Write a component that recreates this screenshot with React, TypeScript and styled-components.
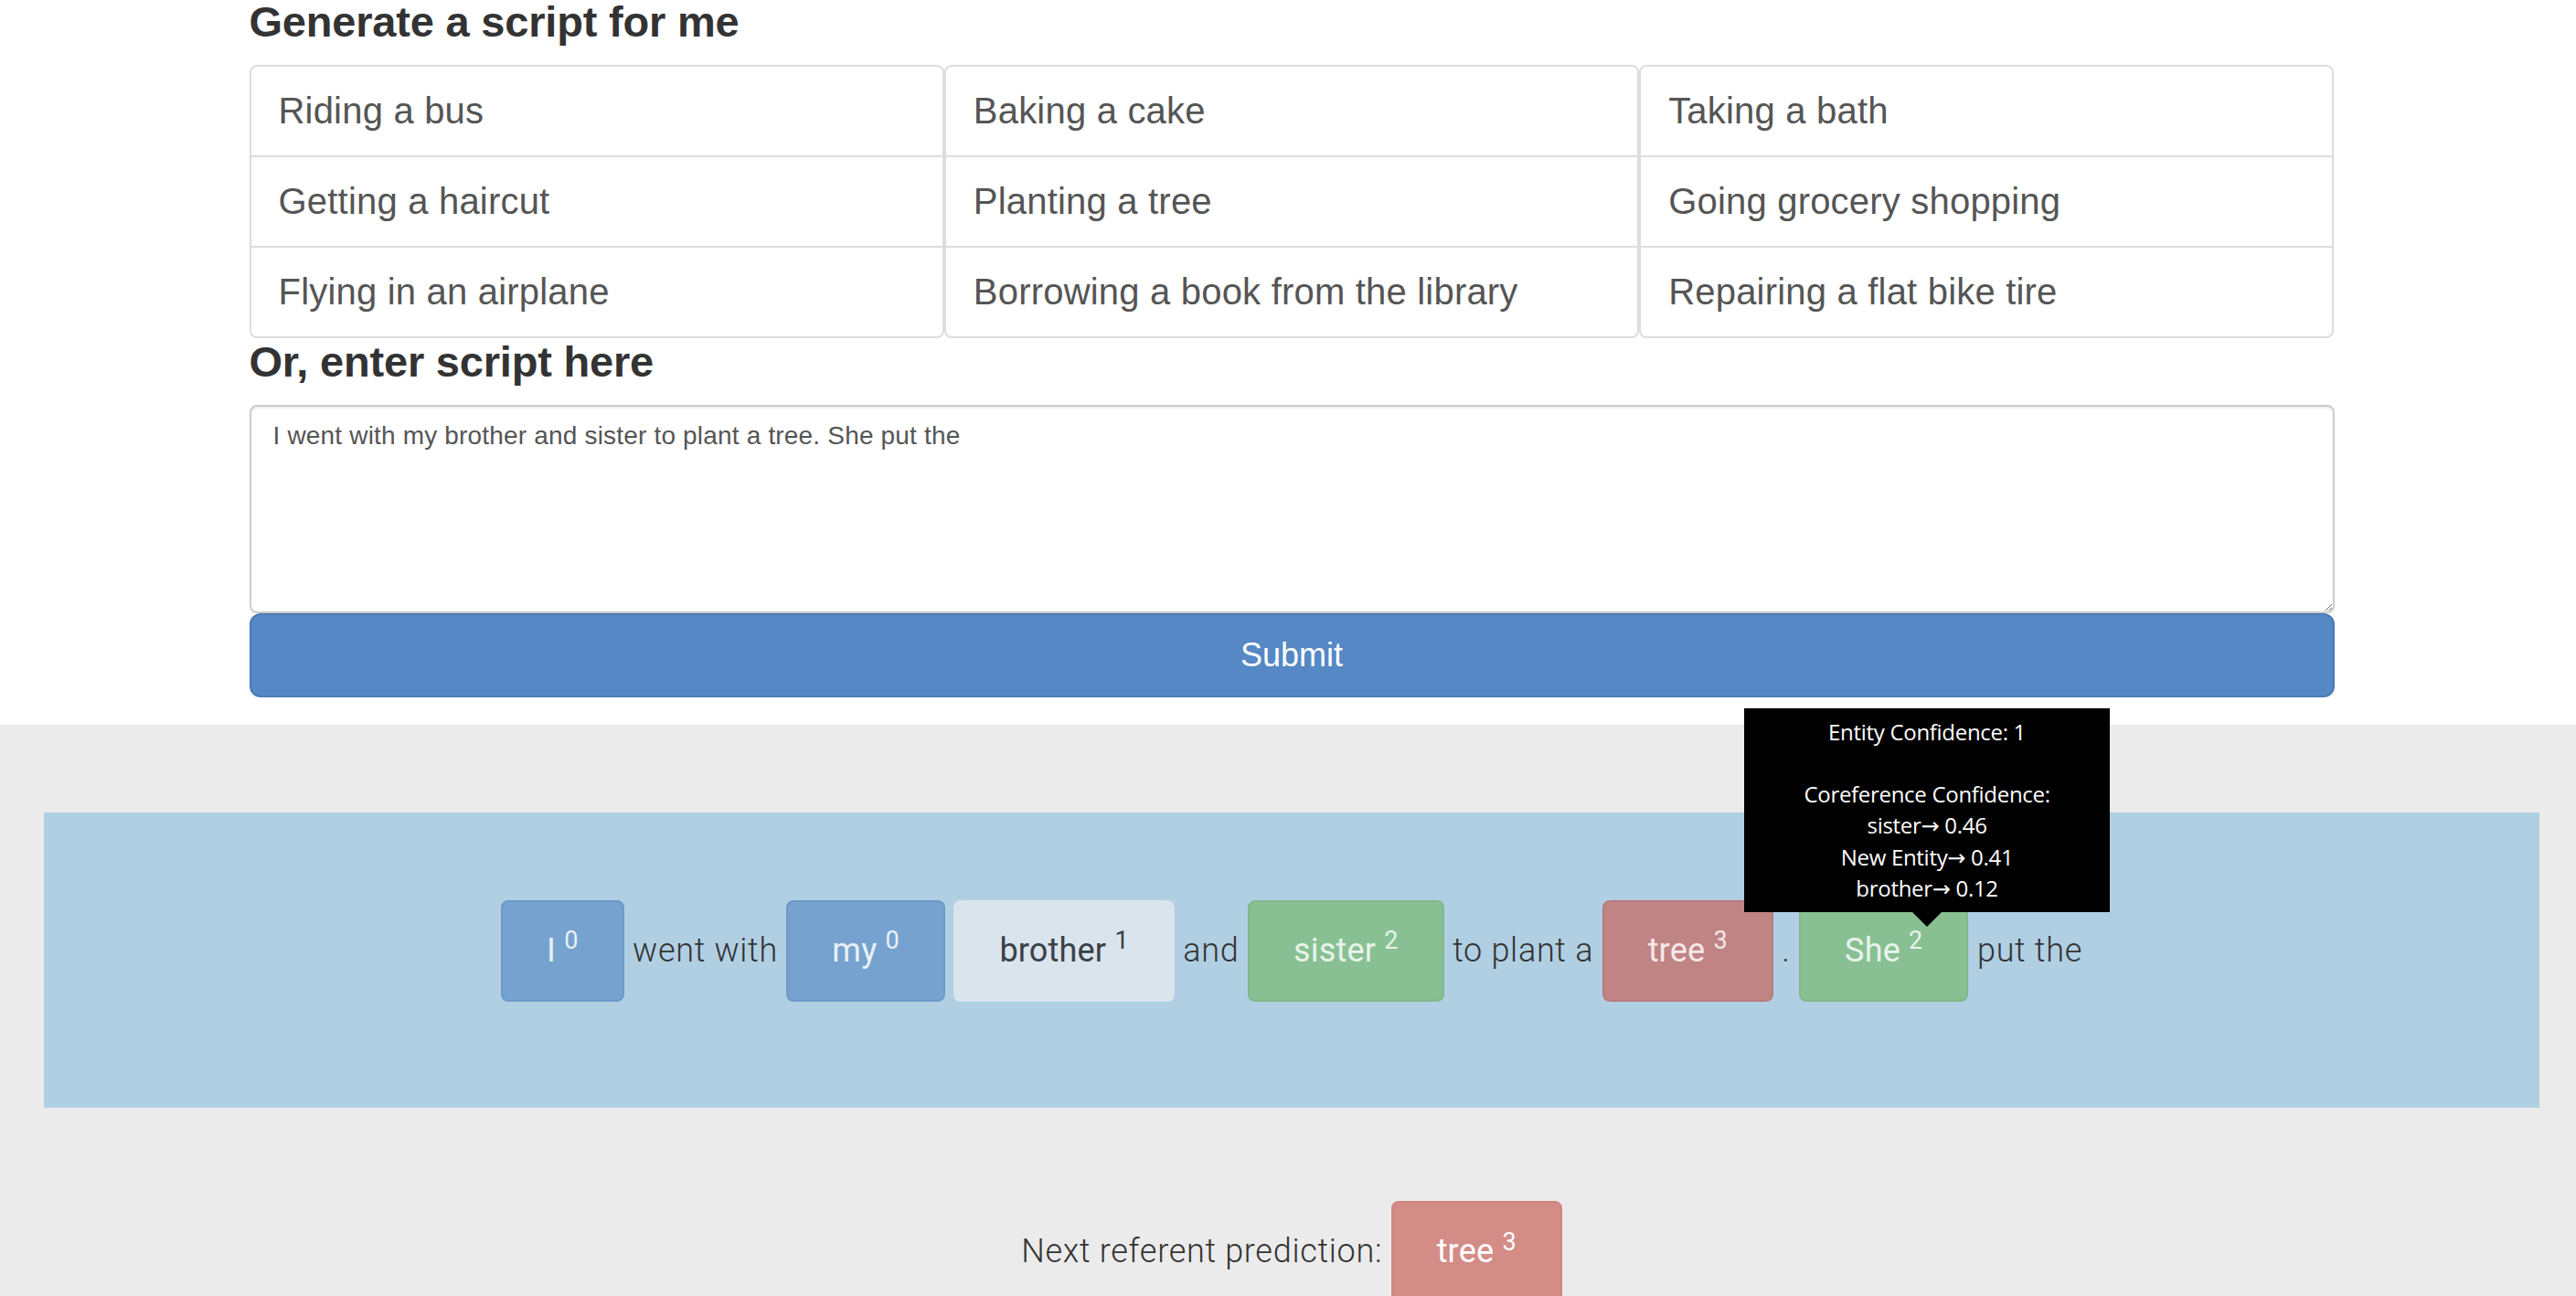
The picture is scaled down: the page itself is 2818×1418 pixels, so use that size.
import React from "react";
import styled, { createGlobalStyle } from "styled-components";

type Tone = "blue" | "light" | "green" | "red" | "prediction";

const palette: Record<Tone, { bg: string; border: string; fg: string }> = {
  blue: { bg: "#76a2cf", border: "#6c99c9", fg: "#eaf1f8" },
  light: { bg: "#d9e4ed", border: "#d9e4ed", fg: "#3b4046" },
  green: { bg: "#88c093", border: "#80b98b", fg: "#e8f3ea" },
  red: { bg: "#c18485", border: "#b97b7c", fg: "#f6e8e8" },
  prediction: { bg: "#d48c87", border: "#d0857f", fg: "#ffffff" },
};

const GlobalStyle = createGlobalStyle`
  html, body {
    margin: 0;
    padding: 0;
    overflow: hidden;
    background: #ffffff;
  }
  body {
    font-family: "Liberation Sans", Arial, sans-serif;
  }
  * { box-sizing: border-box; }
`;

const Page = styled.div`
  width: 2826px;
  min-height: 1418px;
  display: flex;
  flex-direction: column;
`;

const TopSection = styled.section`
  width: 2281px;
  margin: -2px auto 0;
  padding-bottom: 30px;
`;

const SectionTitle = styled.h3`
  margin: 0 0 20px;
  font-family: "Liberation Sans", Arial, sans-serif;
  font-size: 47px;
  font-weight: 700;
  letter-spacing: -0.2px;
  line-height: 52.8px;
  color: #333333;
`;

const ScriptGrid = styled.div`
  display: grid;
  grid-template-columns: repeat(3, 1fr);
`;

const ListGroup = styled.div`
  display: flex;
  flex-direction: column;
`;

const ListItem = styled.a`
  display: block;
  padding: 20px 30px;
  margin-bottom: -2px;
  border: 2px solid #dddddd;
  background: #ffffff;
  color: #555555;
  font-size: 40px;
  line-height: 57px;
  letter-spacing: 0.2px;
  text-decoration: none;
  cursor: pointer;

  &:first-child {
    border-top-left-radius: 8px;
    border-top-right-radius: 8px;
  }
  &:last-child {
    margin-bottom: 0;
    border-bottom-left-radius: 8px;
    border-bottom-right-radius: 8px;
  }
`;

const ScriptInput = styled.textarea`
  display: block;
  width: 100%;
  height: 228px;
  margin: 0;
  padding: 12px 24px;
  border: 2px solid #cccccc;
  border-radius: 8px;
  box-shadow: inset 0 2px 2px rgba(0, 0, 0, 0.075);
  font-family: "Liberation Sans", Arial, sans-serif;
  font-size: 28px;
  line-height: 40px;
  letter-spacing: 0.18px;
  color: #555555;
  resize: vertical;
  outline: none;
`;

const SubmitButton = styled.button`
  display: block;
  width: 100%;
  height: 92px;
  padding: 20px 32px;
  border: 2px solid #4a7bb7;
  border-radius: 12px;
  background: #5588c4;
  color: #ffffff;
  font-family: "Liberation Sans", Arial, sans-serif;
  font-size: 36px;
  line-height: 48px;
  cursor: pointer;
`;

const Results = styled.section`
  flex: 1;
  background: #ebebeb;
  padding: 96px 48px 0;
`;

const SentencePanel = styled.div`
  background: #b0cfe3;
  padding: 96px 0;
  text-align: center;
`;

const Sentence = styled.p`
  margin: 0 0 20px;
  font-family: Roboto, "Liberation Sans", Arial, sans-serif;
  font-weight: 300;
  font-size: 36px;
  line-height: 51.43px;
  letter-spacing: 0.7px;
  color: #333333;
`;

const Token = styled.span<{ $tone: Tone }>`
  position: relative;
  display: inline-block;
  padding: 28px 48px;
  border: 2px solid ${(p) => palette[p.$tone].border};
  border-radius: 8px;
  background: ${(p) => palette[p.$tone].bg};
  color: ${(p) => palette[p.$tone].fg};
  font-weight: 400;
  letter-spacing: 0.2px;
  line-height: 51.43px;
  cursor: pointer;
`;

const Ref = styled.sup`
  position: relative;
  top: -0.5em;
  font-size: 75%;
  font-weight: 400;
  line-height: 0;
  vertical-align: baseline;
`;

const Tooltip = styled.div`
  position: absolute;
  top: -212px;
  left: -62px;
  z-index: 10;
  width: 400px;
  padding: 9px 0;
  background: #000000;
  color: #ffffff;
  font-family: "Open Sans", "DejaVu Sans", sans-serif;
  font-size: 24px;
  font-weight: 400;
  letter-spacing: -0.3px;
  line-height: 34.29px;
  text-align: center;
  white-space: pre-line;
  cursor: default;

  &::after {
    content: "";
    position: absolute;
    top: 100%;
    left: 184px;
    border-style: solid;
    border-width: 16px 16px 0;
    border-color: #000000 transparent transparent;
  }
`;

const Prediction = styled.p`
  margin: 102px 0 0;
  text-align: center;
  font-family: Roboto, "Liberation Sans", Arial, sans-serif;
  font-weight: 300;
  font-size: 36px;
  line-height: 51.43px;
  letter-spacing: 0.7px;
  color: #333333;
`;

const columns: string[][] = [
  ["Riding a bus", "Getting a haircut", "Flying in an airplane"],
  ["Baking a cake", "Planting a tree", "Borrowing a book from the library"],
  ["Taking a bath", "Going grocery shopping", "Repairing a flat bike tire"],
];

type Part =
  | { kind: "text"; text: string }
  | { kind: "entity"; text: string; ref: number; tone: Tone; tip?: string };

const parts: Part[] = [
  { kind: "entity", text: "I", ref: 0, tone: "blue" },
  { kind: "text", text: "went with" },
  { kind: "entity", text: "my", ref: 0, tone: "blue" },
  { kind: "entity", text: "brother", ref: 1, tone: "light" },
  { kind: "text", text: "and" },
  { kind: "entity", text: "sister", ref: 2, tone: "green" },
  { kind: "text", text: "to plant a" },
  { kind: "entity", text: "tree", ref: 3, tone: "red" },
  { kind: "text", text: "." },
  {
    kind: "entity",
    text: "She",
    ref: 2,
    tone: "green",
    tip:
      "Entity Confidence: 1\n\u00a0\nCoreference Confidence:\nsister\u2192 0.46\nNew Entity\u2192 0.41\nbrother\u2192 0.12",
  },
  { kind: "text", text: "put the" },
];

const SCRIPT_TEXT =
  "I went with my brother and sister to plant a tree. She put the";

export default function App() {
  return (
    <Page>
      <GlobalStyle />
      <TopSection>
        <SectionTitle>Generate a script for me</SectionTitle>
        <ScriptGrid>
          {columns.map((col, i) => (
            <ListGroup key={i}>
              {col.map((item) => (
                <ListItem key={item}>{item}</ListItem>
              ))}
            </ListGroup>
          ))}
        </ScriptGrid>
        <SectionTitle>Or, enter script here</SectionTitle>
        <ScriptInput defaultValue={SCRIPT_TEXT} />
        <SubmitButton type="button">Submit</SubmitButton>
      </TopSection>
      <Results>
        <SentencePanel>
          <Sentence>
            {parts.map((p, i) => (
              <React.Fragment key={i}>
                {i > 0 ? " " : null}
                {p.kind === "text" ? (
                  p.text
                ) : (
                  <Token $tone={p.tone}>
                    {p.text} <Ref>{p.ref}</Ref>
                    {p.tip ? <Tooltip>{p.tip}</Tooltip> : null}
                  </Token>
                )}
              </React.Fragment>
            ))}
          </Sentence>
        </SentencePanel>
        <Prediction>
          Next referent prediction:{" "}
          <Token $tone="prediction">
            tree <Ref>3</Ref>
          </Token>
        </Prediction>
      </Results>
    </Page>
  );
}
